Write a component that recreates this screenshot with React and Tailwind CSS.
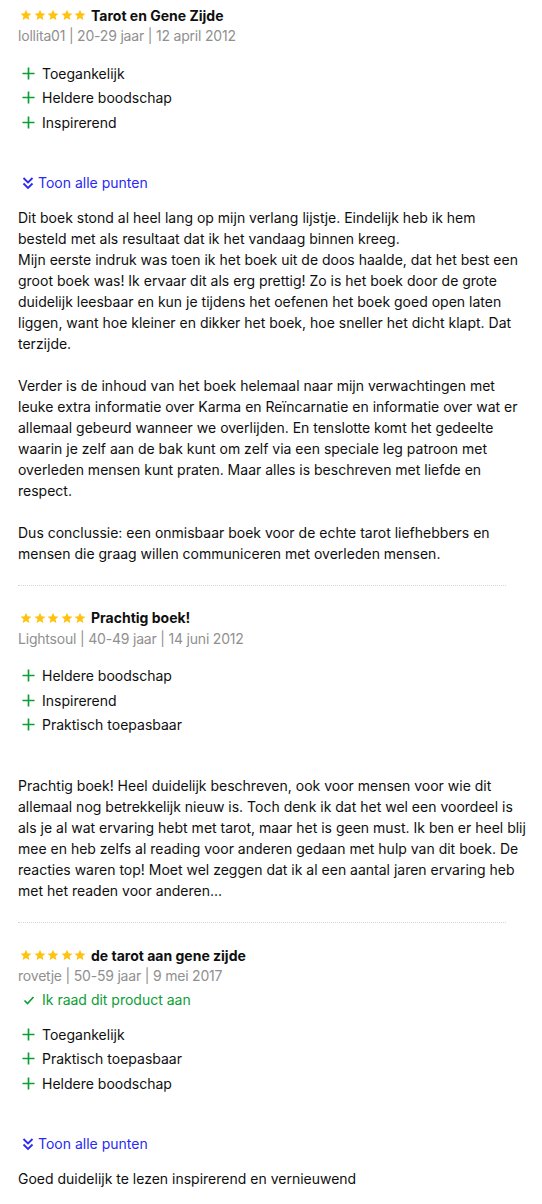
import React from 'react'

const Star = () => (
  <svg width="12" height="12" viewBox="0 0 24 24" className="fill-[#ffc20e]">
    <path d="M12 1.5l3.1 7.1 7.7.7-5.8 5.1 1.7 7.6L12 18l-6.7 4 1.7-7.6-5.8-5.1 7.7-.7z" />
  </svg>
)

const Plus = () => (
  <svg width="13" height="13" viewBox="0 0 14 14" className="stroke-[#0a9e34]" strokeWidth="1.8">
    <path d="M7 0.5v13M0.5 7h13" />
  </svg>
)

const Chevrons = () => (
  <svg width="16" height="16" viewBox="0 0 16 16" fill="none" className="stroke-[#2a2af2]" strokeWidth="1.8">
    <path d="M3.5 3l4.5 4.5L12.5 3M3.5 8.5L8 13l4.5-4.5" />
  </svg>
)

const Check = () => (
  <svg width="12" height="12" viewBox="0 0 12 12" fill="none" className="stroke-[#0a9e34]" strokeWidth="1.6">
    <path d="M1.5 6.5l3 3 6-6.5" />
  </svg>
)

const reviews = [
  {
    title: 'Tarot en Gene Zijde',
    meta: 'lollita01 | 20-29 jaar | 12 april 2012',
    pros: ['Toegankelijk', 'Heldere boodschap', 'Inspirerend'],
    toon: true,
    body: [
      'Dit boek stond al heel lang op mijn verlang lijstje. Eindelijk heb ik hem besteld met als resultaat dat ik het vandaag binnen kreeg.\nMijn eerste indruk was toen ik het boek uit de doos haalde, dat het best een groot boek was! Ik ervaar dit als erg prettig! Zo is het boek door de grote duidelijk leesbaar en kun je tijdens het oefenen het boek goed open laten liggen, want hoe kleiner en dikker het boek, hoe sneller het dicht klapt. Dat terzijde.',
      'Verder is de inhoud van het boek helemaal naar mijn verwachtingen met leuke extra informatie over Karma en Reïncarnatie en informatie over wat er allemaal gebeurd wanneer we overlijden. En tenslotte komt het gedeelte waarin je zelf aan de bak kunt om zelf via een speciale leg patroon met overleden mensen kunt praten. Maar alles is beschreven met liefde en respect.',
      'Dus conclussie: een onmisbaar boek voor de echte tarot liefhebbers en mensen die graag willen communiceren met overleden mensen.',
    ],
  },
  {
    title: 'Prachtig boek!',
    meta: 'Lightsoul | 40-49 jaar | 14 juni 2012',
    pros: ['Heldere boodschap', 'Inspirerend', 'Praktisch toepasbaar'],
    toon: false,
    body: [
      'Prachtig boek! Heel duidelijk beschreven, ook voor mensen voor wie dit allemaal nog betrekkelijk nieuw is. Toch denk ik dat het wel een voordeel is als je al wat ervaring hebt met tarot, maar het is geen must. Ik ben er heel blij mee en heb zelfs al reading voor anderen gedaan met hulp van dit boek. De reacties waren top! Moet wel zeggen dat ik al een aantal jaren ervaring heb met het readen voor anderen...',
    ],
  },
  {
    title: 'de tarot aan gene zijde',
    meta: 'rovetje | 50-59 jaar | 9 mei 2017',
    recommend: true,
    pros: ['Toegankelijk', 'Praktisch toepasbaar', 'Heldere boodschap'],
    toon: true,
    body: ['Goed duidelijk te lezen inspirerend en vernieuwend'],
  },
]

const Review = ({ r, first, last }) => (
  <div
    className={
      (first ? 'pt-[5px] ' : 'pt-[22px] ') +
      (last ? '' : 'pb-[21px] border-b border-dotted border-[#d6d6d6] w-[488px]')
    }
  >
    <div className="w-[509px]">
      <div className="flex items-center h-[20px]">
        <div className="flex gap-[1.5px] ml-[2px] mr-[5px]">
          <Star /><Star /><Star /><Star /><Star />
        </div>
        <span className="font-bold text-[14px] text-[#0f0f0f]">{r.title}</span>
      </div>
      <div className="text-[14px] leading-[22px] tracking-[-0.2px] text-[#909090]">{r.meta}</div>
      {r.recommend && (
        <div className="flex items-center gap-[7px] ml-[5px] h-[25px] text-[14px] text-[#0a9e34]">
          <Check />
          <span>Ik raad dit product aan</span>
        </div>
      )}
      <ul className={r.recommend ? 'mt-[10px]' : 'mt-[14px]'}>
        {r.pros.map((p) => (
          <li key={p} className="flex items-center gap-[7px] h-[24.5px] ml-[4px] text-[14px] text-[#0f0f0f]">
            <Plus />
            <span>{p}</span>
          </li>
        ))}
      </ul>
      {r.toon ? (
        <div className="flex items-center gap-[2px] mt-[38px] mb-[14px] h-[20px] ml-[2px] text-[14px] text-[#2a2af2]">
          <Chevrons />
          <span>Toon alle punten</span>
        </div>
      ) : (
        <div className="h-[38px]" />
      )}
      <div className="flex flex-col gap-[21px] text-[14px] leading-[21px] text-[#0f0f0f]">
        {r.body.map((b, i) => (
          <p key={i} className="whitespace-pre-line">{b}</p>
        ))}
      </div>
    </div>
  </div>
)

export default function App() {
  return (
    <div className="bg-white w-[542px] min-h-[1204px] pl-[18px] font-['Inter',sans-serif]">
      {reviews.map((r, i) => (
        <Review key={i} r={r} first={i === 0} last={i === reviews.length - 1} />
      ))}
    </div>
  )
}
